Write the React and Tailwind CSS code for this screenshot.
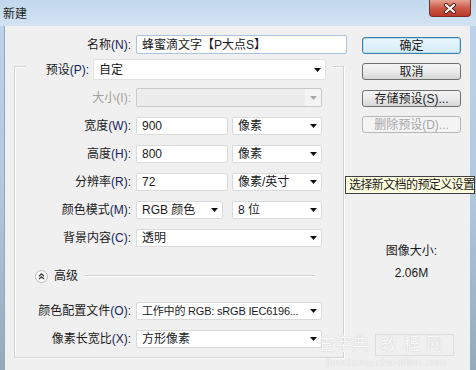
const font = { fontFamily: '"Liberation Sans", "Noto Sans CJK SC", sans-serif' };

const Arrow = ({ muted }) => (
  <svg width="7" height="4" viewBox="0 0 7 4" className="shrink-0">
    <path d="M0 0h7L3.5 4z" fill={muted ? '#a8a8a8' : '#111'} />
  </svg>
);

const Input = ({ value, className = '' }) => (
  <div className={`h-[18px] bg-white border border-[#dadada] rounded-[2px] flex items-center pl-[5px] text-[12px] text-[#1a1a1a] ${className}`}>
    {value}
  </div>
);

const Select = ({ value, className = '', textClass = '' }) => (
  <div className={`h-[18px] bg-white border border-[#dadada] rounded-[2px] flex items-center justify-between pl-[5px] pr-[4px] text-[12px] text-[#1a1a1a] ${className}`}>
    <span className={`whitespace-nowrap ${textClass}`}>{value}</span>
    <Arrow />
  </div>
);

const Label = ({ text, k, muted }) => (
  <div className={`w-[116px] shrink-0 text-right text-[12px] whitespace-nowrap ${muted ? 'text-[#a0a0a0]' : 'text-[#1a1a1a]'}`}>
    {text}
    <span className={muted ? '' : 'text-[#15255a]'}>({k})</span>:
  </div>
);

const Row = ({ label, k, muted, mt, children }) => (
  <div className={`flex items-center ${mt}`}>
    <Label text={label} k={k} muted={muted} />
    <div className="ml-[5px] flex gap-[4px]">{children}</div>
  </div>
);

const Button = ({ children, primary, disabled, mt }) => (
  <div
    className={`h-[17px] w-[99px] rounded-[3px] border flex items-center justify-center text-[12px] ${mt} ${
      primary
        ? 'border-[#3c7fb1] bg-gradient-to-b from-[#eaf6fd] to-[#d6ecf8] text-[#1a1a1a] shadow-[inset_0_0_0_1px_#b6dcf2]'
        : disabled
        ? 'border-[#b5b8ba] bg-[#f4f4f4] text-[#a6a6a6]'
        : 'border-[#707070] bg-gradient-to-b from-[#f4f4f4] via-[#ebebeb] to-[#d6d6d6] text-[#1a1a1a]'
    }`}
  >
    {children}
  </div>
);

export default function App() {
  return (
    <div className="w-[476px] h-[370px] overflow-hidden relative bg-gradient-to-b from-[#bcd4ec] via-[#b4c9de] to-[#95a9bd]" style={font}>
      {/* title bar */}
      <div className="h-[26px] flex items-start justify-between bg-gradient-to-b from-[#c3d8ee] to-[#d2e2f2]">
        <div className="pl-[3px] pt-[5px] text-[12px] text-[#1e1e1e]">新建</div>
        <div className="mr-[5px] w-[42px] h-[17px] rounded-b-[4px] border border-t-0 border-[#7a2d25] bg-gradient-to-b from-[#e4a395] via-[#cd5a48] to-[#b8392a] flex items-center justify-center">
          <svg width="14" height="11" viewBox="0 0 14 11">
            <path d="M3 2l8 7M11 2l-8 7" stroke="#5a1a14" strokeWidth="4" strokeLinecap="round" />
            <path d="M3 2l8 7M11 2l-8 7" stroke="#fff" strokeWidth="2.2" strokeLinecap="round" />
          </svg>
        </div>
      </div>

      {/* client area */}
      <div className="ml-[4px] w-[466px] h-[344px] bg-[#f0f0f0] border-l border-[#8fa6bd] flex">
        {/* left column */}
        <div className="w-[357px] shrink-0">
          <div className="mt-[9px] flex items-center">
            <div className="w-[126px] text-right text-[12px] text-[#1a1a1a] whitespace-nowrap">
              名称<span className="text-[#15255a]">(N)</span>:
            </div>
            <div className="ml-[5px] w-[211px] h-[19px] bg-white border border-[#a9c4de] rounded-[2px] flex items-center pl-[5px] text-[12px] text-[#1a1a1a] whitespace-nowrap">
              蜂蜜滴文字【P大点S】
            </div>
          </div>

          {/* group box */}
          <div className="mt-[12px] ml-[9px] w-[330px] h-[292px] border border-[#d2d2d2] shadow-[inset_1px_1px_0_#fff,1px_1px_0_#fff] flex flex-col">
            <div className="-mt-[8px] ml-[11px] w-[307px] h-[21px] bg-[#f0f0f0] flex items-center">
              <div className="w-[63px] text-right text-[12px] text-[#1a1a1a] whitespace-nowrap">
                预设<span className="text-[#15255a]">(P)</span>:
              </div>
              <div className="ml-[4px] w-[233px] h-[21px] bg-white border border-[#e2e2e2] rounded-[2px] flex items-center justify-between pl-[5px] pr-[4px] text-[12px] text-[#1a1a1a]">
                <span>自定</span>
                <Arrow />
              </div>
            </div>

            <Row label="大小" k="I" muted mt="mt-[8px]">
              <div className="w-[186px] h-[19px] border border-[#c9c9c9] rounded-[2px] bg-[#f4f4f4] flex">
                <div className="w-[168px] bg-[#ececec]" />
                <div className="flex-1 flex items-center justify-center">
                  <Arrow muted />
                </div>
              </div>
            </Row>
            <Row label="宽度" k="W" mt="mt-[10px]">
              <Input value="900" className="w-[92px]" />
              <Select value="像素" className="w-[90px]" />
            </Row>
            <Row label="高度" k="H" mt="mt-[10px]">
              <Input value="800" className="w-[92px]" />
              <Select value="像素" className="w-[90px]" />
            </Row>
            <Row label="分辨率" k="R" mt="mt-[10px]">
              <Input value="72" className="w-[92px]" />
              <Select value="像素/英寸" className="w-[90px]" />
            </Row>
            <Row label="颜色模式" k="M" mt="mt-[10px]">
              <Select value="RGB 颜色" className="w-[87px]" />
              <Select value="8 位" className="w-[90px] ml-[5px]" />
            </Row>
            <Row label="背景内容" k="C" mt="mt-[10px]">
              <Select value="透明" className="w-[186px]" />
            </Row>

            {/* advanced */}
            <div className="mt-[22px] h-[14px] flex items-center pl-[20px]">
              <svg width="13" height="13" viewBox="0 0 13 13" className="shrink-0">
                <circle cx="6.5" cy="6.5" r="6" fill="#fbfbfb" stroke="#b9b9b9" />
                <path d="M4 6.2l2.5-2.3 2.5 2.3M4 9l2.5-2.3L9 9" fill="none" stroke="#333" strokeWidth="1.2" />
              </svg>
              <span className="ml-[6px] text-[12px] text-[#1a1a1a]">高级</span>
              <div className="ml-[6px] w-[231px] h-[2px] border-t border-[#d2d2d2] border-b border-b-white" />
            </div>

            <Row label="颜色配置文件" k="O" mt="mt-[19px]">
              <Select value="工作中的 RGB: sRGB IEC6196..." className="w-[186px]" textClass="text-[11px] tracking-[-0.2px]" />
            </Row>
            <Row label="像素长宽比" k="X" mt="mt-[10px]">
              <Select value="方形像素" className="w-[186px]" />
            </Row>
          </div>
        </div>

        {/* right column */}
        <div className="w-[99px] shrink-0 flex flex-col items-center">
          <Button primary mt="mt-[11px]">确定</Button>
          <Button mt="mt-[9px]">取消</Button>
          <Button mt="mt-[10px]">存储预设(S)...</Button>
          <Button disabled mt="mt-[9px]">删除预设(D)...</Button>
          <div className="mt-[110px] text-[12px] leading-[16px] text-[#1a1a1a]">图像大小:</div>
          <div className="mt-[6px] text-[12px] leading-[16px] text-[#1a1a1a]">2.06M</div>
        </div>
      </div>

      {/* tooltip */}
      <div className="absolute left-[345px] top-[176px] h-[18px] pl-[3px] bg-[#ffffe1] border border-[#404040] text-[12px] leading-[16px] tracking-[-0.6px] text-[#1a1a1a] whitespace-nowrap">
        选择新文档的预定义设置
      </div>

      {/* watermark */}
      <div className="absolute left-[318px] top-[334px] flex flex-col items-center pointer-events-none">
        <div className="flex items-center gap-[6px] text-[17px] leading-[20px] text-[#f8f8f8] [text-shadow:0_0_1px_#bdbdbd]">
          <span>查字典</span>
          <span className="px-[4px] border border-[#dcdcdc] tracking-[6px]">教程网</span>
        </div>
        <div className="text-[11px] leading-[12px] text-[#f6f6f6] [text-shadow:0_0_1px_#c4c4c4]">jiaocheng.chazidian.com</div>
      </div>
    </div>
  );
}
